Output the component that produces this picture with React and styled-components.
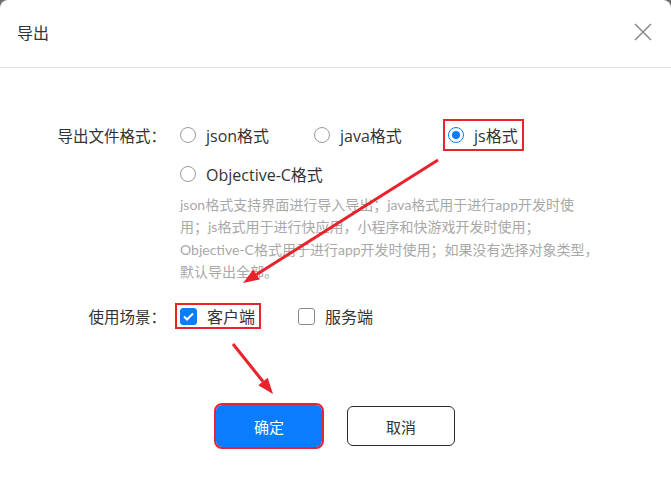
import styled, { createGlobalStyle } from "styled-components";

const GlobalStyle = createGlobalStyle`
    html, body {
        margin: 0;
        padding: 0;
        background: #6e6e6e;
    }
    body {
        font-family: "Open Sans", "Noto Sans CJK SC", sans-serif;
        color: #333;
    }
`;

const Dialog = styled.div`
    position: relative;
    width: 671px;
    height: 480px;
    background: #fff;
    border-radius: 8px 8px 0 0;
    overflow: hidden;
`;

const Header = styled.div`
    height: 68px;
    display: flex;
    align-items: center;
    justify-content: space-between;
    padding: 0 19px 4px 17px;
    border-bottom: 1px solid #e3e3e3;
    box-sizing: border-box;
`;

const Title = styled.div`
    font-size: 16px;
    color: #333;
    font-family: "Noto Sans CJK SC", sans-serif;
`;

const Close = styled.button`
    width: 18px;
    height: 18px;
    padding: 0;
    border: none;
    background: none;
    display: flex;
`;

const Body = styled.div`
    padding-top: 50px;
`;

const FormRow = styled.div`
    display: grid;
    grid-template-columns: 166px 1fr;
    column-gap: 14px;
    margin-top: ${(props) => props.mt || 0}px;
`;

const Label = styled.div`
    text-align: right;
    font-size: 15.5px;
    line-height: ${(props) => props.lh || 34}px;
    color: #333;
    font-family: "Noto Sans CJK SC", sans-serif;
`;

const Options = styled.div`
    display: flex;
    flex-wrap: wrap;
    max-width: ${(props) => props.width}px;
    row-gap: 5px;
`;

const Option = styled.label`
    display: flex;
    align-items: center;
    height: ${(props) => props.h || 34}px;
    min-width: ${(props) => props.w}px;
    font-size: 16px;
    color: #333;
`;

const OptionText = styled.span`
    margin-left: 10px;
`;

const Marked = styled.span`
    display: inline-flex;
    align-items: center;
    box-sizing: border-box;
    height: ${(props) => props.h}px;
    padding: 0 4px 0 3px;
    margin-left: -5px;
    border: 2px solid #e8232b;
`;

const Radio = styled.span`
    width: 16px;
    height: 16px;
    box-sizing: border-box;
    border-radius: 50%;
    border: 1px solid ${(props) => (props.on ? "#0a7cff" : "#9a9a9a")};
    display: flex;
    align-items: center;
    justify-content: center;
    &::after {
        content: "";
        width: 8px;
        height: 8px;
        border-radius: 50%;
        background: ${(props) => (props.on ? "#0a7cff" : "transparent")};
    }
`;

const Check = styled.span`
    width: 17px;
    height: 17px;
    box-sizing: border-box;
    border-radius: 3px;
    border: 1px solid ${(props) => (props.on ? "#0a7cff" : "#8a8a8a")};
    background: ${(props) => (props.on ? "#0a7cff" : "#fff")};
    display: flex;
    align-items: center;
    justify-content: center;
`;

const Hint = styled.p`
    margin: 3px 0 0;
    width: 421px;
    font-size: 14px;
    line-height: 22.3px;
    color: #a8a8a8;
    font-family: "Lato", "Noto Sans CJK SC", sans-serif;
`;

const Footer = styled.div`
    display: flex;
    justify-content: center;
    gap: 25px;
    margin-top: 76px;
`;

const Button = styled.button`
    width: ${(props) => (props.primary ? 106 : 108)}px;
    height: ${(props) => (props.primary ? 42 : 40)}px;
    margin-top: ${(props) => (props.primary ? 0 : 1)}px;
    box-sizing: border-box;
    border-radius: 6px;
    font-size: 15px;
    font-family: "Noto Sans CJK SC", sans-serif;
    border: ${(props) => (props.primary ? "none" : "1px solid #2a2a2a")};
    background: ${(props) => (props.primary ? "#0a7cff" : "#fff")};
    color: ${(props) => (props.primary ? "#fff" : "#333")};
    outline: ${(props) => (props.mark ? "2px solid #e8232b" : "none")};
    outline-offset: 0;
`;

const Arrows = styled.svg`
    position: absolute;
    left: 0;
    top: 0;
    pointer-events: none;
`;

function Arrow({ x1, y1, x2, y2 }) {
    const a = Math.atan2(y2 - y1, x2 - x1);
    const len = 16;
    const w = 6;
    const bx = x2 - len * Math.cos(a);
    const by = y2 - len * Math.sin(a);
    const px = -Math.sin(a) * w;
    const py = Math.cos(a) * w;
    return (
        <g>
            <line x1={x1} y1={y1} x2={bx} y2={by} stroke="#e8232b" strokeWidth="3" />
            <polygon
                points={`${x2},${y2} ${bx + px},${by + py} ${bx - px},${by - py}`}
                fill="#e8232b"
            />
        </g>
    );
}

export default function App() {
    return (
        <>
            <GlobalStyle />
            <Dialog>
                <Header>
                    <Title>导出</Title>
                    <Close>
                        <svg width="18" height="18" viewBox="0 0 18 18">
                            <path d="M1 1L17 17M17 1L1 17" stroke="#8c8c8c" strokeWidth="1.6" />
                        </svg>
                    </Close>
                </Header>
                <Body>
                    <FormRow>
                        <Label>导出文件格式：</Label>
                        <div>
                            <Options width={420}>
                                <Option w={134}>
                                    <Radio />
                                    <OptionText>json格式</OptionText>
                                </Option>
                                <Option w={134}>
                                    <Radio />
                                    <OptionText>java格式</OptionText>
                                </Option>
                                <Option w={134}>
                                    <Marked h={32}>
                                        <Radio on />
                                        <OptionText>js格式</OptionText>
                                    </Marked>
                                </Option>
                                <Option>
                                    <Radio />
                                    <OptionText>Objective-C格式</OptionText>
                                </Option>
                            </Options>
                            <Hint>
                                json格式支持界面进行导入导出；java格式用于进行app开发时使用；js格式用于进行快应用，小程序和快游戏开发时使用；Objective-C格式用于进行app开发时使用；如果没有选择对象类型，默认导出全部。
                            </Hint>
                        </div>
                    </FormRow>
                    <FormRow mt={20}>
                        <Label lh={26}>使用场景：</Label>
                        <Options width={420}>
                            <Option w={118} h={26}>
                                <Marked h={26}>
                                    <Check on>
                                        <svg width="11" height="9" viewBox="0 0 11 9">
                                            <path d="M1 4.5L4 7.5L10 1.5" stroke="#fff" strokeWidth="2" fill="none" />
                                        </svg>
                                    </Check>
                                    <OptionText>客户端</OptionText>
                                </Marked>
                            </Option>
                            <Option h={26}>
                                <Check />
                                <OptionText>服务端</OptionText>
                            </Option>
                        </Options>
                    </FormRow>
                    <Footer>
                        <Button primary mark>确定</Button>
                        <Button>取消</Button>
                    </Footer>
                </Body>
                <Arrows width="671" height="480">
                    <Arrow x1={438} y1={160} x2={243} y2={283} />
                    <Arrow x1={233} y1={344} x2={273} y2={394} />
                </Arrows>
            </Dialog>
        </>
    );
}
